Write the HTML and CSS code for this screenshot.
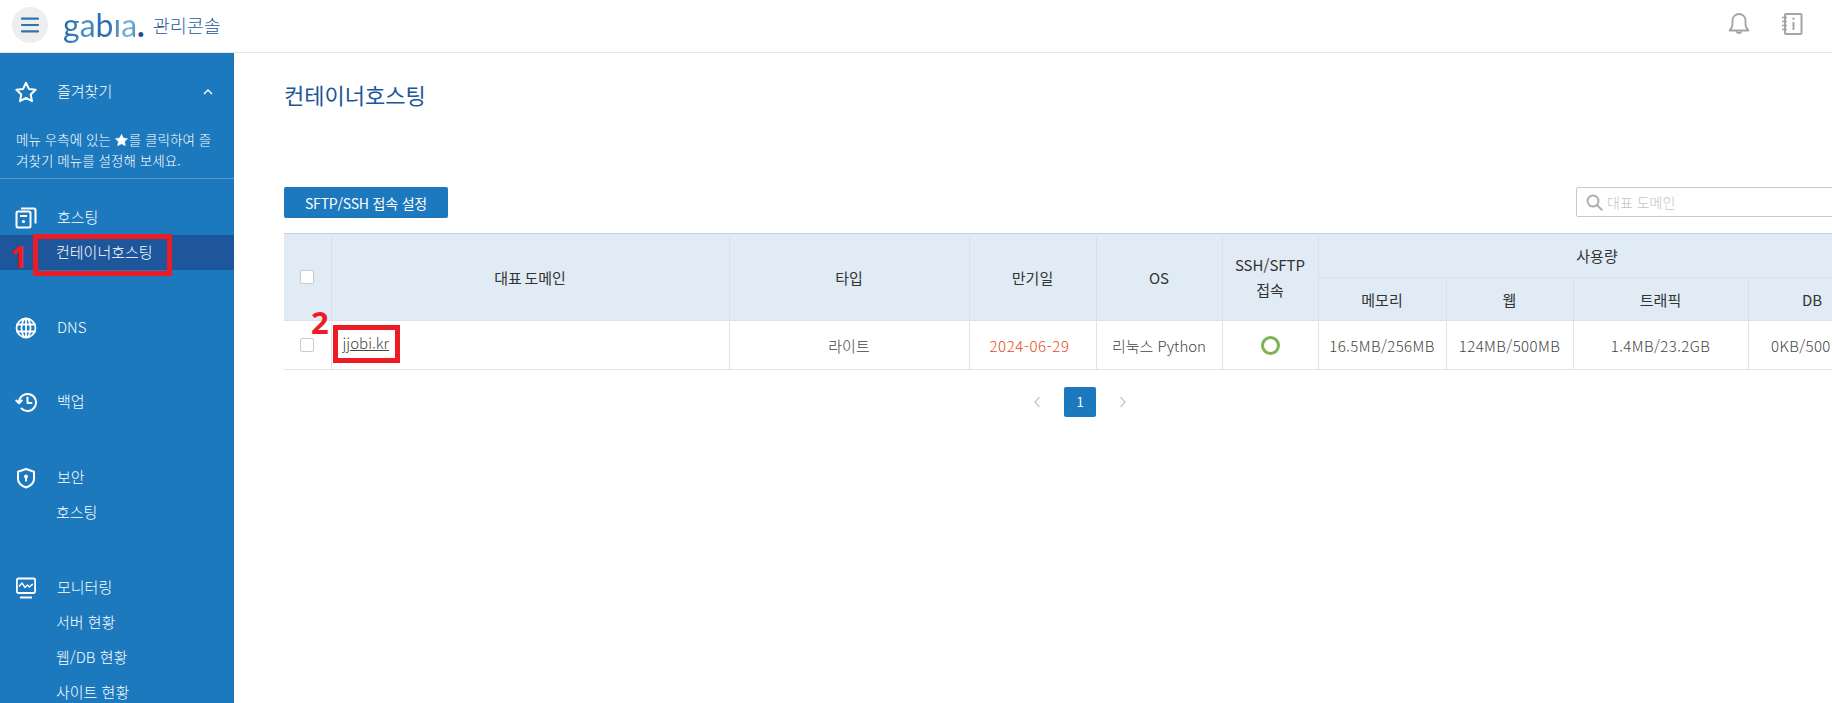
FILE: index.html
```html
<!DOCTYPE html>
<html lang="ko">
<head>
<meta charset="utf-8">
<title>가비아 관리콘솔</title>
<link rel="stylesheet" href="styles.css">
</head>
<body>
<header class="topbar">
  <div class="brand">
    <button class="menu-btn" aria-label="메뉴">
      <svg width="20" height="16" viewBox="0 0 20 16"><path d="M2 1.700h16M2 8h16M2 14.300h16" fill="none" stroke="#3173ad" stroke-width="2.200" stroke-linecap="round"/></svg>
    </button>
    <span class="logo"><span class="logo-word">gabıa</span><span class="logo-dot">.</span></span>
    <span class="console">관리콘솔</span>
  </div>
  <div class="top-icons">
    <svg width="24" height="24" viewBox="0 0 24 24" fill="none" stroke="#a3a6a9" stroke-width="1.800" stroke-linejoin="round"><path d="M2.500 18.500c1.800-1.600 3-3.200 3-6.500V8.500a6.500 6.500 0 0 1 13 0V12c0 3.300 1.200 4.900 3 6.500z"/><path d="M9.500 18.500a2.500 2.500 0 0 0 5 0"/></svg>
    <svg width="24" height="24" viewBox="0 0 24 24" fill="none" stroke="#a3a6a9" stroke-width="2"><rect x="5" y="2" width="16.500" height="20" rx="1"/><path d="M2 5.500h5M2 9.500h5M2 13.500h5M2 17.500h5" stroke-width="1.600"/><path d="M13.500 10v8M13.500 5.500v2.200" stroke-width="2"/></svg>
  </div>
</header>

<div class="layout">
  <nav class="sidebar">
    <div class="nav-row fav">
      <svg class="nav-icon" width="22" height="22" viewBox="0 0 22 22" fill="none" stroke="#fff" stroke-width="2" stroke-linejoin="round"><path d="M11 1.800l2.900 6.100 6.700.9-4.900 4.700 1.300 6.600-6-3.300-6 3.300 1.300-6.600-4.900-4.700 6.700-.9z"/></svg>
      <span class="nav-label">즐겨찾기</span>
      <svg class="chev" width="10" height="6" viewBox="0 0 10 6" fill="none" stroke="#fff" stroke-width="1.300"><path d="M1 5l4-4 4 4"/></svg>
    </div>
    <p class="fav-help">메뉴 우측에 있는 <svg class="mini-star" width="13" height="12" viewBox="0 0 22 20"><path d="M11 .5l3.200 6.300 7 1-5 4.900 1.200 6.900-6.400-3.300-6.400 3.300 1.200-6.900-5-4.900 7-1z" fill="#fff" stroke="#fff" stroke-linejoin="round"/></svg>를 클릭하여 즐겨찾기 메뉴를 설정해 보세요.</p>

    <div class="nav-group first">
      <div class="nav-row">
        <svg class="nav-icon" width="22" height="22" viewBox="0 0 22 22" fill="none" stroke="#fff" stroke-width="2" stroke-linejoin="round"><rect x="1.500" y="4.500" width="14" height="16" rx="1.500"/><path d="M6 1.500h13a1.500 1.500 0 0 1 1.500 1.500v13.500"/><path d="M5 9h7"/><circle cx="8.500" cy="14.500" r="1.600" fill="#fff" stroke="none"/></svg>
        <span class="nav-label">호스팅</span>
      </div>
      <div class="nav-sub active">컨테이너호스팅</div>
    </div>

    <div class="nav-group">
      <div class="nav-row">
        <svg class="nav-icon" width="22" height="22" viewBox="0 0 22 22" fill="none" stroke="#fff" stroke-width="1.800"><circle cx="11" cy="11" r="9.500"/><ellipse cx="11" cy="11" rx="4.500" ry="9.500"/><path d="M11 1.500v19M1.500 7.500h19M1.500 14.500h19"/></svg>
        <span class="nav-label">DNS</span>
      </div>
    </div>

    <div class="nav-group tight">
      <div class="nav-row">
        <svg class="nav-icon" width="22" height="22" viewBox="0 0 22 22" fill="none" stroke="#fff" stroke-width="2" stroke-linecap="round" stroke-linejoin="round"><path d="M4 11.500A8.500 8.500 0 1 1 6.500 17.500"/><path d="M1.300 9.500L4 12.300l2.800-2.800"/><path d="M12.500 6.500v5.500h4"/></svg>
        <span class="nav-label">백업</span>
      </div>
    </div>

    <div class="nav-group wide">
      <div class="nav-row">
        <svg class="nav-icon" width="22" height="22" viewBox="0 0 22 22" fill="none" stroke="#fff" stroke-width="2" stroke-linejoin="round"><path d="M11 2l8 2.800V12c0 4-3.300 6.800-8 8.500C6.300 18.800 3 16 3 12V4.800z"/><circle cx="11" cy="9.500" r="2" fill="#fff" stroke="none"/><path d="M11 9.500v5"/></svg>
        <span class="nav-label">보안</span>
      </div>
      <div class="nav-sub">호스팅</div>
    </div>

    <div class="nav-group">
      <div class="nav-row">
        <svg class="nav-icon" width="22" height="22" viewBox="0 0 22 22" fill="none" stroke="#fff" stroke-width="1.800" stroke-linejoin="round"><rect x="1.900" y="1.500" width="18.200" height="14.500" rx="1.500"/><path d="M4 9.500l3-3.500 3 4.500 2.500-2.500 2 2 2.500-2.500h1" stroke-width="1.400"/><path d="M5 20.500h12" stroke-width="2"/></svg>
        <span class="nav-label">모니터링</span>
      </div>
      <div class="nav-sub">서버 현황</div>
      <div class="nav-sub">웹/DB 현황</div>
      <div class="nav-sub">사이트 현황</div>
    </div>
  </nav>

  <main class="main">
    <div class="content">
      <h1 class="title">컨테이너호스팅</h1>
      <div class="toolbar">
        <button class="btn">SFTP/SSH 접속 설정</button>
        <div class="search">
          <svg width="17" height="17" viewBox="0 0 17 17" fill="none" stroke="#a9a9a9" stroke-width="1.800" stroke-linecap="round"><circle cx="7" cy="7" r="5.500"/><path d="M11 11l4.800 4.800"/></svg>
          <span class="placeholder">대표 도메인</span>
        </div>
      </div>
      <table class="grid">
        <colgroup>
          <col class="c-check"><col class="c-domain"><col class="c-type"><col class="c-date"><col class="c-os"><col class="c-ssh"><col class="c-mem"><col class="c-web"><col class="c-traffic"><col class="c-db">
        </colgroup>
        <thead>
          <tr class="head-top">
            <th rowspan="2"><span class="check"></span></th>
            <th rowspan="2">대표 도메인</th>
            <th rowspan="2">타입</th>
            <th rowspan="2">만기일</th>
            <th rowspan="2">OS</th>
            <th rowspan="2">SSH/SFTP<br>접속</th>
            <th colspan="4">사용량</th>
          </tr>
          <tr class="head-sub">
            <th>메모리</th><th>웹</th><th>트래픽</th><th>DB</th>
          </tr>
        </thead>
        <tbody>
          <tr>
            <td><span class="check"></span></td>
            <td class="domain"><a href="#">jjobi.kr</a></td>
            <td>라이트</td>
            <td class="expire">2024-06-29</td>
            <td>리눅스 Python</td>
            <td><span class="status"></span></td>
            <td class="num">16.5MB/256MB</td>
            <td class="num">124MB/500MB</td>
            <td class="num">1.4MB/23.2GB</td>
            <td class="num">0KB/500MB</td>
          </tr>
        </tbody>
      </table>
      <div class="pager">
        <svg width="8" height="12" viewBox="0 0 8 12" fill="none" stroke="#c4c8cc" stroke-width="1.300"><path d="M6.500 1L2 6l4.500 5"/></svg>
        <span class="page-on">1</span>
        <svg width="8" height="12" viewBox="0 0 8 12" fill="none" stroke="#c4c8cc" stroke-width="1.300"><path d="M1.500 1L6 6l-4.500 5"/></svg>
      </div>
    </div>
  </main>
</div>

<div class="mark mark-box-1"></div>
<div class="mark mark-num-1">1</div>
<div class="mark mark-box-2"></div>
<div class="mark mark-num-2">2</div>
</body>
</html>
```

FILE: styles.css
```css
* { box-sizing: border-box; }
html, body { margin: 0; height: 100%; }
body {
  position: relative;
  overflow: hidden;
  background: #fff;
  color: #333;
  font-family: "Noto Sans CJK KR", "Noto Sans", sans-serif;
  font-size: 14px;
}

/* top bar */
.topbar {
  height: 53px;
  border-bottom: 1px solid #e6e6e6;
  padding: 0 28px 2px 12px;
  display: flex;
  align-items: center;
  justify-content: space-between;
}
.brand { display: flex; align-items: center; }
.menu-btn {
  width: 36px;
  height: 36px;
  border: 0;
  border-radius: 50%;
  background: #eeeeee;
  display: flex;
  align-items: center;
  justify-content: center;
  padding: 0;
}
.logo {
  margin-left: 15px;
  font-family: "Lato", sans-serif;
  font-size: 32px;
  line-height: 36px;
  display: flex;
}
.logo-word {
  background: linear-gradient(100deg, #1f5f9f 0%, #4f95cc 35%, #1e5ea3 55%, #7fb5dc 85%, #3f88c2 100%);
  -webkit-background-clip: text;
  background-clip: text;
  color: transparent;
}
.logo-dot { color: #1d4f8f; font-weight: 700; }
.console {
  margin-left: 8px;
  font-size: 18.500px;
  color: #1d5a9c;
  font-weight: 300;
}
.top-icons { display: flex; align-items: center; gap: 29px; margin-bottom: 3px; }

/* layout */
.layout { display: flex; height: 650px; }

/* sidebar */
.sidebar {
  width: 234px;
  flex: none;
  height: 100%;
  overflow: hidden;
  background: #1c79bd;
  color: #fff;
  padding-top: 21px;
}
.nav-row {
  height: 35px;
  padding: 0 16px 0 15px;
  display: flex;
  align-items: center;
}
.nav-icon { flex: none; margin-right: 20px; }
.nav-label { font-size: 15px; font-weight: 300; padding-bottom: 2px; }
.chev { margin-left: auto; margin-right: 5px; }
.fav-help {
  margin: 20px 0 0;
  padding: 0 16px;
  font-size: 13.500px;
  letter-spacing: 0.05px;
  line-height: 21px;
  font-weight: 300;
  height: 50px;
  border-bottom: 1px solid rgba(255, 255, 255, 0.25);
  word-break: break-all;
}
.mini-star { vertical-align: -1px; margin-right: 1px; }
.nav-group { margin-top: 40px; }
.nav-group.first { margin-top: 21px; }
.nav-group.tight { margin-top: 39px; }
.nav-group.wide { margin-top: 41px; }
.nav-sub {
  height: 35px;
  line-height: 34px;
  padding-left: 56px;
  font-size: 15px;
  font-weight: 300;
}
.nav-sub.active { background: #1d569b; }

/* main */
.main { flex: 1; min-width: 0; overflow: hidden; padding-left: 50px; }
.content { width: 1592px; }
.title {
  margin: 26px 0 0;
  font-size: 22px;
  line-height: 30px;
  font-weight: 400;
  color: #1d569b;
}
.toolbar {
  margin-top: 78px;
  height: 31px;
  display: flex;
  justify-content: space-between;
  align-items: flex-start;
}
.btn {
  width: 164px;
  height: 31px;
  border: 0;
  border-radius: 2px;
  background: #1c79bd;
  color: #fff;
  font: inherit;
  font-size: 14px;
  letter-spacing: -0.2px;
  padding: 0;
}
.search {
  width: 300px;
  height: 30px;
  border: 1px solid #c9c9c9;
  border-radius: 2px;
  padding-left: 9px;
  display: flex;
  align-items: center;
  gap: 4px;
}
.placeholder { color: #c4c4c4; font-size: 14px; font-weight: 300; }

/* table */
.grid {
  margin-top: 15px;
  width: 100%;
  table-layout: fixed;
  border-collapse: collapse;
  border-top: 1px solid #c4d0dc;
  border-bottom: 1px solid #e2e4e6;
  text-align: center;
}
.c-check { width: 47px; }
.c-domain { width: 398px; }
.c-type { width: 240px; }
.c-date { width: 127px; }
.c-os { width: 126px; }
.c-ssh { width: 96px; }
.c-mem { width: 128px; }
.c-web { width: 127px; }
.c-traffic { width: 175px; }
.c-db { width: 128px; }
.grid th {
  background: #e1ebf5;
  border: 1px solid #d9e1e8;
  border-top: 0;
  font-weight: 400;
  font-size: 15px;
  line-height: 25px;
  word-spacing: -1.500px;
  padding: 0;
  color: #333;
}
.grid th:first-child, .grid td:first-child { border-left: 0; }
.head-top { height: 44px; }
.head-sub { height: 43px; }
.grid td {
  height: 49px;
  border: 1px solid #e0e3e6;
  border-top: 0;
  border-bottom: 0;
  padding: 0;
  font-size: 15px;
  font-weight: 300;
  color: #444;
  white-space: nowrap;
  overflow: hidden;
}
.grid td.domain { text-align: left; padding: 0 0 6px 11px; }
.domain a { color: #444; }
.grid td.num { letter-spacing: 0.4px; }
.grid td.expire { color: #e64a19; letter-spacing: 0.6px; padding-right: 6px; }
.check {
  display: block;
  margin: 0 auto;
  width: 14px;
  height: 14px;
  background: #fff;
  border: 1px solid #c9cccf;
  border-radius: 2px;
}
.status {
  display: block;
  margin: 0 auto;
  width: 19px;
  height: 19px;
  border: 3px solid #7cb356;
  border-radius: 50%;
}

/* pager */
.pager {
  margin-top: 17px;
  display: flex;
  justify-content: center;
  align-items: center;
  gap: 23px;
}
.page-on {
  width: 32px;
  height: 30px;
  line-height: 30px;
  text-align: center;
  border-radius: 2px;
  background: #1c79bd;
  color: #fff;
  font-size: 13px;
}

/* annotations drawn over the screenshot */
.mark { position: absolute; color: #ed1c24; font-weight: 700; font-family: "Noto Sans", sans-serif; font-size: 31px; line-height: 36px; }
.mark-box-1 { left: 33px; top: 234px; width: 139px; height: 42px; border: 5px solid #ed1c24; }
.mark-num-1 { left: 10px; top: 238px; }
.mark-box-2 { left: 333px; top: 325px; width: 67px; height: 38px; border: 5px solid #ed1c24; }
.mark-num-2 { left: 311px; top: 304px; }
```
